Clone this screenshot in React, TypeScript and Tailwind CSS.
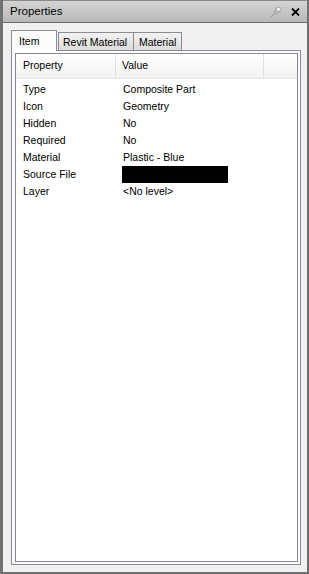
const ROWS: [string, string | null][] = [
  ['Type', 'Composite Part'],
  ['Icon', 'Geometry'],
  ['Hidden', 'No'],
  ['Required', 'No'],
  ['Material', 'Plastic - Blue'],
  ['Source File', null],
  ['Layer', '<No level>'],
]

function PinIcon() {
  return (
    <svg width="12" height="12" viewBox="0 0 12 12">
      <path d="M1 11 L5 7" stroke="#9a9a9a" strokeWidth="1" />
      <path d="M4 6 L6 8 L9.5 5.5 L6.5 2.5 Z" fill="#c4c4c4" stroke="#8a8a8a" strokeWidth="0.6" />
      <circle cx="8.6" cy="3.4" r="2.4" fill="#e2e2e2" stroke="#8c8c8c" strokeWidth="0.7" />
      <circle cx="8.2" cy="3" r="0.9" fill="#ffffff" />
    </svg>
  )
}

function CloseIcon() {
  return (
    <svg width="9" height="8" viewBox="0 0 9 8">
      <path d="M1 0.5 L8 7.5 M8 0.5 L1 7.5" stroke="#000" strokeWidth="1.8" />
    </svg>
  )
}

export default function App() {
  return (
    <div className="w-[309px] h-[574px] flex flex-col bg-[#f0f0f0] border-l-[3px] border-r-[2px] border-b-[2px] border-[#707070] font-['Liberation_Sans',Arial,sans-serif] text-black">
      {/* title bar */}
      <div className="h-[23px] shrink-0 flex items-center pl-[7px] pr-[7px] bg-gradient-to-b from-[#d4d4d4] to-[#b8b8b8] border-b border-[#6c6c6c] border-t border-t-[#8a8a8a]">
        <span className="text-[11.5px] leading-none">Properties</span>
        <div className="ml-auto flex items-center gap-[9px]">
          <PinIcon />
          <CloseIcon />
        </div>
      </div>

      {/* body */}
      <div className="flex-1 flex flex-col pt-[7px] pl-[8px] pr-[6px] pb-[7px]">
        <div className="flex items-end h-[20px] text-[10.5px]">
          <div className="relative z-10 -mb-px h-[21px] w-[46px] bg-[#fcfcfc] border-t border-l border-r border-[#898c95] pl-[7px] pt-[3px] leading-[14px]">
            Item
          </div>
          <div className="h-[18px] w-[76px] ml-px bg-gradient-to-b from-[#f2f2f2] to-[#dcdcdc] border-t border-l border-r border-[#898c95] pl-[4px] pt-[2px] leading-[14px]">
            Revit Material
          </div>
          <div className="h-[18px] w-[48px] bg-gradient-to-b from-[#f2f2f2] to-[#dcdcdc] border-t border-r border-[#898c95] pl-[5px] pt-[2px] leading-[14px]">
            Material
          </div>
        </div>

        <div className="flex-1 flex flex-col border border-[#898c95] bg-[#fcfcfc] pt-[2px] pl-[3px] pr-[2px] pb-[2px]">
          <div className="flex-1 flex flex-col border border-[#828790] bg-white text-[10.5px]">
            <div className="h-[25px] shrink-0 flex bg-gradient-to-b from-white to-[#f2f2f2] border-b border-[#e6e6e6]">
              <div className="w-[100px] flex items-center pl-[7px] border-r border-[#e2e2e2]">Property</div>
              <div className="w-[148px] flex items-center pl-[6px] border-r border-[#e2e2e2]">Value</div>
              <div className="flex-1" />
            </div>
            <div className="mt-[2px] flex flex-col">
              {ROWS.map(([name, value]) => (
                <div key={name} className="h-[17px] flex items-center">
                  <div className="w-[100px] pl-[7px]">{name}</div>
                  {value === null ? (
                    <div className="ml-[6px] w-[106px] h-[17px] bg-black" />
                  ) : (
                    <div className="pl-[7px]">{value}</div>
                  )}
                </div>
              ))}
            </div>
          </div>
        </div>
      </div>
    </div>
  )
}
